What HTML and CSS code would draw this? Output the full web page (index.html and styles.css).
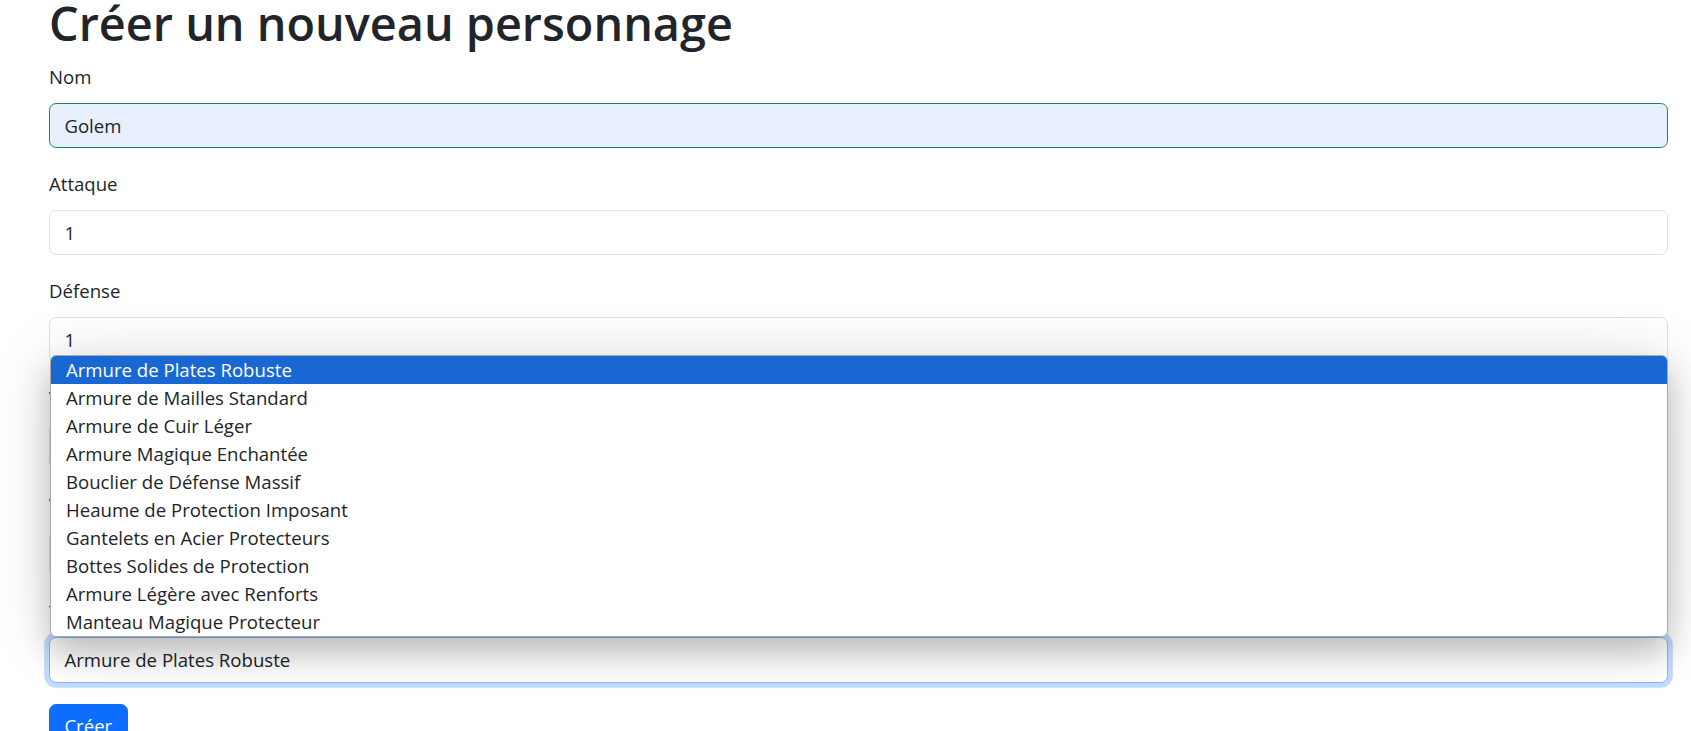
FILE: index.html
```html
<!DOCTYPE html>
<html lang="fr">
<head>
<meta charset="utf-8">
<title>Créer un nouveau personnage</title>
<link rel="stylesheet" href="styles.css">
</head>
<body>
<main class="page">
  <h1 class="title">Créer un nouveau personnage</h1>
  <form class="form">
    <div class="field">
      <label class="label" for="nom">Nom</label>
      <input class="control control-autofill" id="nom" type="text" value="Golem">
    </div>
    <div class="field">
      <label class="label" for="attaque">Attaque</label>
      <input class="control" id="attaque" type="text" value="1">
    </div>
    <div class="field">
      <label class="label" for="defense">Défense</label>
      <input class="control" id="defense" type="text" value="1">
    </div>
    <div class="field">
      <label class="label" for="vie">Vie</label>
      <input class="control" id="vie" type="text" value="1">
    </div>
    <div class="field">
      <label class="label" for="vitesse">Vitesse</label>
      <input class="control" id="vitesse" type="text" value="1">
    </div>
    <div class="field field-last">
      <label class="label" for="armure">Type</label>
      <select class="control control-focus select" id="armure">
        <option selected>Armure de Plates Robuste</option>
      </select>
    </div>
    <button class="btn" type="button">Créer</button>
  </form>
  <div class="popup">
    <div class="option option-active">Armure de Plates Robuste</div>
    <div class="option">Armure de Mailles Standard</div>
    <div class="option">Armure de Cuir Léger</div>
    <div class="option">Armure Magique Enchantée</div>
    <div class="option">Bouclier de Défense Massif</div>
    <div class="option">Heaume de Protection Imposant</div>
    <div class="option">Gantelets en Acier Protecteurs</div>
    <div class="option">Bottes Solides de Protection</div>
    <div class="option">Armure Légère avec Renforts</div>
    <div class="option">Manteau Magique Protecteur</div>
  </div>
</main>
</body>
</html>
```
FILE: styles.css
```css
html, body {
  margin: 0;
  padding: 0;
  height: 100%;
  overflow: hidden;
  background: #fff;
}

body {
  font-family: "Open Sans", "Noto Sans", sans-serif;
  font-size: 18.6px;
  color: #212529;
}

.page {
  position: relative;
  padding: 0 23px 0 49px;
}

.title {
  margin: 0 0 16.4px;
  font-size: 46.8px;
  font-weight: 600;
  line-height: 47px;
  color: #212529;
}

.form {
  margin: 0;
}

.field {
  margin-bottom: 22.2px;
}

.field-last {
  margin-bottom: 20.8px;
}

.label {
  display: block;
  line-height: 28.8px;
  margin-bottom: 10.4px;
}

.control {
  display: block;
  width: 100%;
  box-sizing: border-box;
  height: 45.6px;
  margin: 0;
  padding: 0 14.4px;
  font: inherit;
  line-height: 28.8px;
  color: #212529;
  background: #fff;
  border: 1px solid #dee2e6;
  border-radius: 7.2px;
  outline: none;
}

.control-autofill {
  background: #e8f0fe;
  border-color: #198754;
}

.control-focus {
  border-color: #86b7fe;
  box-shadow: 0 0 0 4.8px rgba(13, 110, 253, 0.25);
}

.select {
  appearance: none;
  -webkit-appearance: none;
}

.btn {
  display: block;
  box-sizing: border-box;
  height: 45.6px;
  padding: 0 14.4px;
  font: inherit;
  line-height: 28.8px;
  color: #fff;
  background: #0d6efd;
  border: 1px solid #0d6efd;
  border-radius: 7.2px;
}

.popup {
  position: absolute;
  top: 355px;
  left: 50px;
  right: 23px;
  z-index: 10;
  background: #fff;
  border: 1px solid #a8a8a8;
  border-radius: 6px;
  overflow: hidden;
  box-shadow: 0 16px 30px rgba(0, 0, 0, 0.2), 0 4px 64px rgba(0, 0, 0, 0.14);
}

.option {
  height: 28px;
  line-height: 28px;
  padding-left: 15px;
  white-space: nowrap;
  color: #212529;
}

.option-active {
  background: #1967d2;
  color: #fff;
}
```
